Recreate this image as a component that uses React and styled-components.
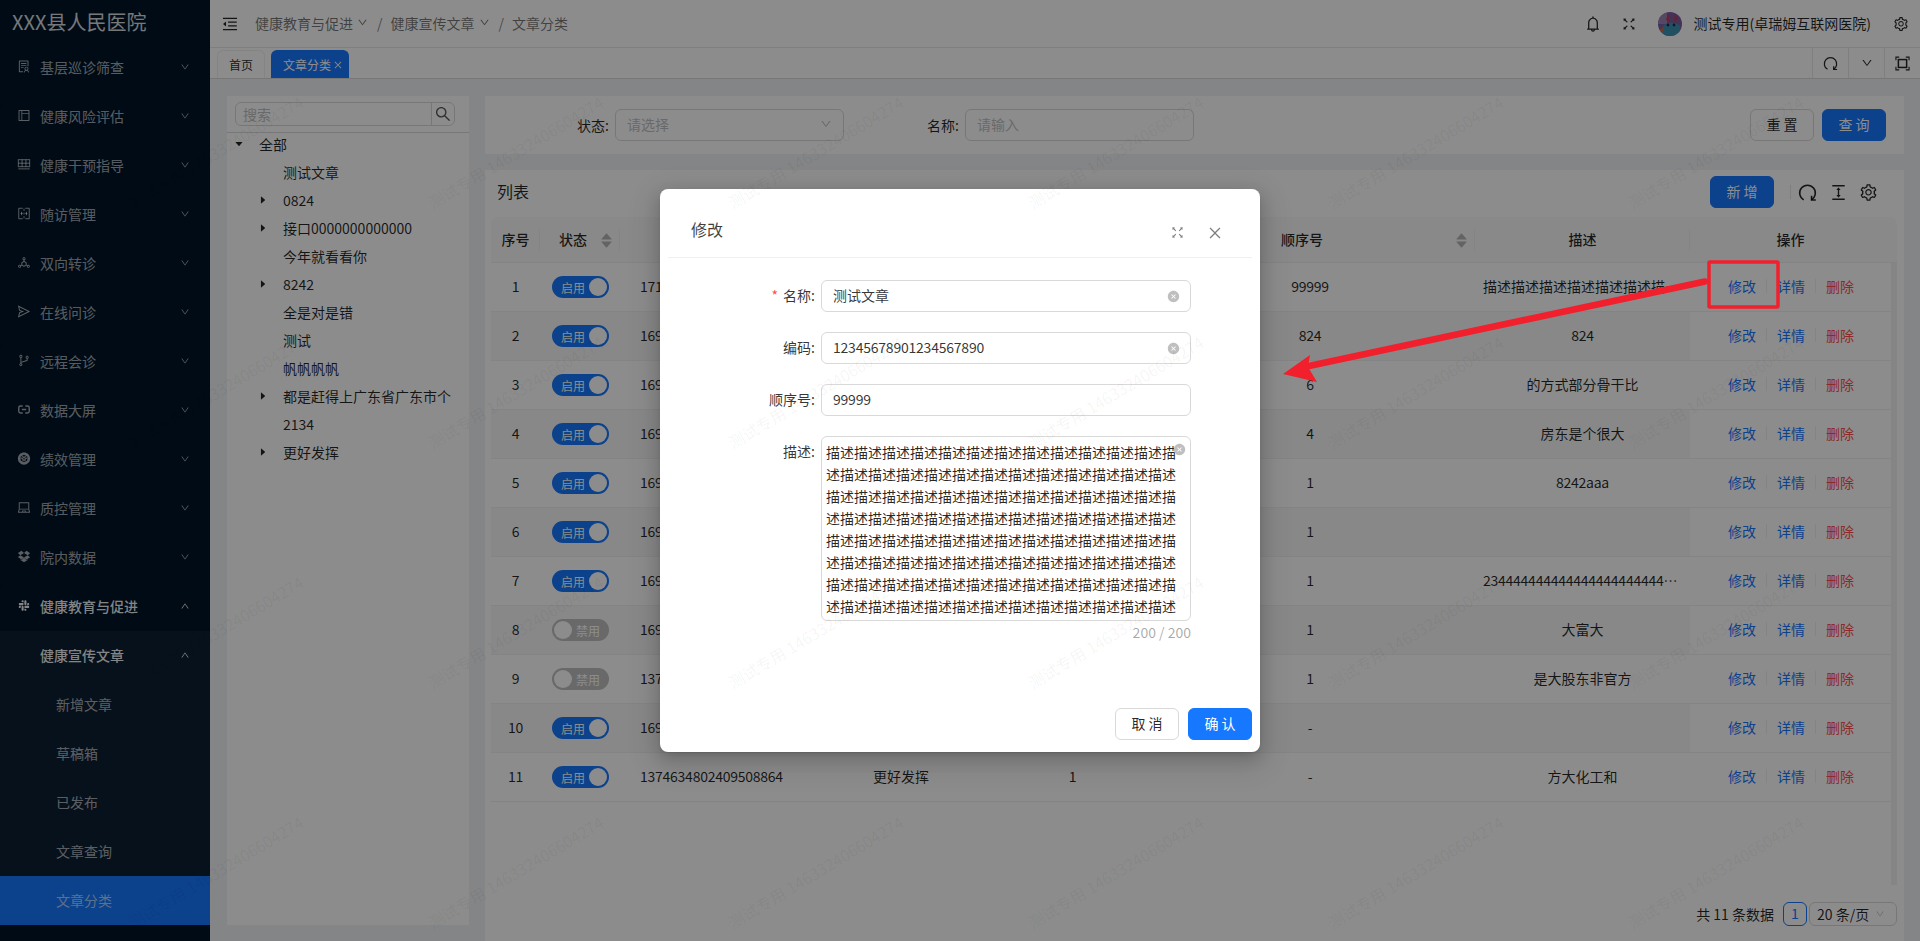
import React from 'react';
import styled, { createGlobalStyle } from 'styled-components';
import {
  AiOutlineSolution,
  AiOutlineLayout,
  AiOutlineDeploymentUnit,
  AiOutlineSend,
  AiOutlineBranches,
  AiFillCodeSandboxCircle,
  AiOutlineLaptop,
  AiOutlineDropbox,
  AiOutlineSlack,
  AiOutlineDown,
  AiOutlineUp,
  AiOutlineMenuFold,
  AiOutlineBell,
  AiOutlineFullscreen,
  AiOutlineSetting,
  AiOutlineColumnHeight,
  AiOutlineClose,
  AiFillCloseCircle,
  AiFillCaretDown,
  AiFillCaretRight,
  AiFillCaretUp,
  AiOutlineSearch,
} from 'react-icons/ai';

const GlobalStyle = createGlobalStyle`
  html, body {
    margin: 0;
    padding: 0;
    background: #f0f2f5;
    overflow: hidden;
  }
  * {
    box-sizing: border-box;
  }
  body, input, textarea, button {
    font-family: "Noto Sans CJK SC", "Noto Sans", sans-serif;
    font-size: 14px;
  }
`;

const COLUMNS = '49px 80px 182px 198px 145px 330px 215px 201px';

const Page = styled.div`
  position: relative;
  display: flex;
  width: 1920px;
  height: 941px;
  overflow: hidden;
  color: rgba(0, 0, 0, 0.85);
`;

/* Sidebar */
const Sidebar = styled.aside`
  flex: 0 0 210px;
  background: #001529;
  color: rgba(255, 255, 255, 0.65);
`;

const Logo = styled.div`
  height: 43px;
  padding: 0 0 0 12px;
  font-size: 20px;
  line-height: 43px;
  white-space: nowrap;
  color: rgba(255, 255, 255, 0.85);
`;

const SubMenu = styled.div`
  background: #0d1f33;
`;

const MenuRow = styled.div`
  display: flex;
  align-items: center;
  height: 49px;
  padding: 0 20px 2px ${p => p.$indent}px;
  background: ${p => (p.$active ? '#1677ff' : 'transparent')};
  color: ${p => (p.$bright ? 'rgba(255,255,255,0.95)' : 'inherit')};
  font-weight: ${p => (p.$bright ? 500 : 400)};
`;

const MenuIcon = styled.span`
  display: inline-flex;
  width: 14px;
  margin-right: 9px;
  font-size: 17px;
  justify-content: center;
`;

const MenuLabel = styled.span`
  flex: 1;
`;

const MenuArrow = styled.span`
  display: inline-flex;
  font-size: 10px;
`;

/* Main column */
const Main = styled.div`
  flex: 1;
  min-width: 0;
  display: flex;
  flex-direction: column;
`;

const Header = styled.header`
  flex: 0 0 48px;
  display: flex;
  align-items: center;
  padding: 0 11px;
  background: #fff;
  border-bottom: 1px solid #e8e8e8;
`;

const Toggle = styled.span`
  display: inline-flex;
  font-size: 18px;
  margin-right: 16px;
`;

const Crumb = styled.span`
  display: inline-flex;
  align-items: center;
  padding-bottom: 2px;
  color: rgba(0, 0, 0, 0.55);
  svg {
    margin-left: 4px;
    font-size: 11px;
  }
`;

const CrumbSep = styled.span`
  margin: 0 8px 2px 9px;
  color: rgba(0, 0, 0, 0.5);
`;

const HeaderRight = styled.div`
  margin-left: auto;
  display: flex;
  align-items: center;
`;

const HeaderIcon = styled.span`
  display: inline-flex;
  font-size: ${p => p.$size || 16}px;
  margin-left: ${p => p.$gap || 0}px;
`;

const HeaderUser = styled.span`
  padding-bottom: 2px;
`;

const Avatar = styled.svg`
  width: 24px;
  height: 24px;
  margin: 0 12px 0 21px;
`;

const TabBar = styled.div`
  flex: 0 0 31px;
  display: flex;
  align-items: flex-end;
  gap: 6px;
  padding-left: 7px;
  background: #fff;
  border-bottom: 1px solid #d9d9d9;
`;

const Tab = styled.div`
  display: flex;
  align-items: center;
  gap: 2px;
  height: 28px;
  width: ${p => p.$w}px;
  padding-left: 11px;
  font-size: 12px;
  border: 1px solid ${p => (p.$active ? '#1677ff' : '#f0f0f0')};
  border-bottom: 0;
  border-radius: 6px 6px 0 0;
  background: ${p => (p.$active ? '#1677ff' : '#fff')};
  color: ${p => (p.$active ? '#fff' : 'rgba(0,0,0,0.85)')};
  svg {
    font-size: 10px;
  }
`;

const TabTools = styled.div`
  margin-left: auto;
  display: flex;
  height: 30px;
`;

const TabTool = styled.div`
  display: flex;
  align-items: center;
  justify-content: center;
  width: 36px;
  border-left: 1px solid #e8e8e8;
  font-size: ${p => p.$size || 15}px;
`;

const Content = styled.div`
  flex: 1;
  min-height: 0;
  display: flex;
  gap: 16px;
  padding: 17px 16px 16px 17px;
  overflow: hidden;
`;

/* Tree */
const TreePanel = styled.section`
  flex: 0 0 242px;
  background: #fff;
`;

const TreeSearch = styled.div`
  height: 37px;
  padding: 6px 14px 0 8px;
  border-bottom: 1px solid #d9d9d9;
`;

const SearchBox = styled.div`
  display: flex;
  height: 24px;
  border: 1px solid #d9d9d9;
  border-radius: 6px;
`;

const SearchInput = styled.input`
  flex: 1;
  min-width: 0;
  padding: 0 7px;
  border: 0;
  background: transparent;
  outline: 0;
  line-height: 22px;
  &::placeholder {
    color: #bfbfbf;
  }
`;

const SearchButton = styled.span`
  display: flex;
  align-items: center;
  justify-content: center;
  width: 23px;
  border-left: 1px solid #d9d9d9;
  font-size: 18px;
  color: rgba(0, 0, 0, 0.65);
`;

const TreeRow = styled.div`
  display: flex;
  align-items: center;
  height: 28px;
  padding: 0 0 6px ${p => p.$level * 24}px;
  white-space: nowrap;
`;

const TreeCaret = styled.span`
  display: flex;
  align-items: center;
  justify-content: center;
  flex: 0 0 24px;
  margin-right: 8px;
  font-size: 10px;
`;

/* Right column */
const RightColumn = styled.div`
  flex: 1;
  min-width: 0;
  display: flex;
  flex-direction: column;
  gap: 16px;
`;

const FilterPanel = styled.section`
  flex: 0 0 58px;
  display: flex;
  align-items: center;
  padding: 0 18px 0 9px;
  background: #fff;
`;

const FilterField = styled.label`
  flex: 0 0 350px;
  display: flex;
  align-items: center;
  justify-content: flex-end;
  gap: 6px;
`;

const FilterControl = styled.div`
  display: flex;
  align-items: center;
  justify-content: space-between;
  width: 229px;
  height: 32px;
  padding: 0 11px 2px;
  border: 1px solid #d9d9d9;
  border-radius: 6px;
  color: #bfbfbf;
  svg {
    font-size: 12px;
  }
`;

const FilterActions = styled.div`
  margin-left: auto;
  display: flex;
  gap: 8px;
`;

const Button = styled.button`
  width: 64px;
  height: 32px;
  padding: 0 0 2px;
  border: 1px solid ${p => (p.$primary ? '#1677ff' : '#d9d9d9')};
  border-radius: 6px;
  background: ${p => (p.$primary ? '#1677ff' : '#fff')};
  color: ${p => (p.$primary ? '#fff' : 'rgba(0,0,0,0.85)')};
`;

const ListPanel = styled.section`
  flex: 0 0 771px;
  padding: 0 7px 0 6px;
  background: #fff;
`;

const ListBar = styled.div`
  display: flex;
  align-items: center;
  height: 47px;
  padding: 0 19px 3px 6px;
`;

const ListTitle = styled.div`
  flex: 1;
  font-size: 16px;
  padding-bottom: 2px;
`;

const BarDivider = styled.span`
  width: 1px;
  height: 14px;
  margin: 0 7px 0 16px;
  background: #e8e8e8;
`;

const BarIcon = styled.span`
  display: inline-flex;
  font-size: 19px;
  margin-left: ${p => p.$gap || 0}px;
`;

const TableHead = styled.div`
  display: grid;
  grid-template-columns: ${COLUMNS} 6px;
  height: 46px;
  background: #fafafa;
  border-bottom: 1px solid #f0f0f0;
  border-radius: 8px 8px 0 0;
  font-weight: 500;
`;

const HeadCell = styled.div`
  position: relative;
  display: flex;
  align-items: center;
  justify-content: ${p => (p.$sort ? 'flex-start' : 'center')};
  padding: 0 0 2px ${p => p.$sort || 0}px;
  &::after {
    content: '';
    display: ${p => (p.$last ? 'none' : 'block')};
    position: absolute;
    right: 0;
    top: 12px;
    height: 22px;
    width: 1px;
    background: #f0f0f0;
  }
`;

const Sorter = styled.span`
  position: absolute;
  right: 6px;
  top: 12px;
  display: flex;
  flex-direction: column;
  font-size: 15px;
  line-height: 0;
  color: #b5b5b5;
  svg + svg {
    margin-top: -7px;
  }
`;

const TableBody = styled.div`
  display: flex;
  height: 622px;
`;

const Rows = styled.div`
  flex: 0 0 1400px;
`;

const Scrollbar = styled.div`
  flex: 0 0 6px;
  background: #f2f2f2;
`;

const Row = styled.div`
  display: grid;
  grid-template-columns: ${COLUMNS};
  height: 49px;
  border-bottom: 1px solid #f0f0f0;
  background: ${p => (p.$stripe ? '#f8f8f8' : '#fff')};
`;

const Cell = styled.div`
  padding: 0 8px 0 ${p => (p.$left ? 20 : 8)}px;
  line-height: 46px;
  text-align: ${p => (p.$left ? 'left' : 'center')};
  white-space: nowrap;
  overflow: hidden;
  text-overflow: ellipsis;
  letter-spacing: ${p => (p.$num ? '-0.25px' : '0')};
`;

const SwitchCell = styled.div`
  display: flex;
  align-items: center;
  padding-left: 12px;
`;

const Switch = styled.div`
  display: flex;
  align-items: center;
  flex-direction: ${p => (p.$on ? 'row' : 'row-reverse')};
  justify-content: space-between;
  width: 57px;
  height: 22px;
  padding: 0 ${p => (p.$on ? 2 : 9)}px 0 ${p => (p.$on ? 9 : 2)}px;
  border-radius: 11px;
  background: ${p => (p.$on ? '#1677ff' : '#bfbfbf')};
  color: #fff;
  font-size: 12px;
`;

const Thumb = styled.span`
  width: 18px;
  height: 18px;
  border-radius: 50%;
  background: #fff;
`;

const Actions = styled.div`
  display: flex;
  align-items: center;
  padding: 0 0 2px 38px;
  background: #fff;
`;

const ActionLink = styled.a`
  color: ${p => (p.$danger ? '#ff4d4f' : '#1677ff')};
`;

const ActionSep = styled.span`
  width: 1px;
  height: 14px;
  margin: 0 10px;
  background: #f0f0f0;
`;

const Pagination = styled.div`
  display: flex;
  justify-content: flex-end;
  align-items: center;
  margin-top: 17px;
`;

const PageNumber = styled.span`
  width: 24px;
  height: 24px;
  margin: 0 2px 0 9px;
  border: 1px solid #1677ff;
  border-radius: 6px;
  color: #1677ff;
  line-height: 21px;
  text-align: center;
`;

const PageSize = styled.div`
  display: flex;
  align-items: center;
  justify-content: space-between;
  width: 88px;
  height: 24px;
  padding: 0 11px 0 7px;
  border: 1px solid #d9d9d9;
  border-radius: 6px;
  svg {
    font-size: 10px;
    color: #bfbfbf;
  }
`;

/* Overlays */
const Mask = styled.div`
  position: absolute;
  inset: 0;
  z-index: 10;
  background: rgba(0, 0, 0, 0.45);
`;

const Modal = styled.div`
  position: absolute;
  z-index: 11;
  left: 660px;
  top: 189px;
  width: 600px;
  height: 563px;
  display: flex;
  flex-direction: column;
  border-radius: 8px;
  background: #fff;
  box-shadow: 0 6px 16px 0 rgba(0, 0, 0, 0.16), 0 3px 6px -4px rgba(0, 0, 0, 0.2), 0 9px 28px 8px rgba(0, 0, 0, 0.1);
`;

const ModalHead = styled.div`
  display: flex;
  height: 69px;
  margin: 0 8px;
  padding: 28px 29px 0 23px;
  border-bottom: 1px solid #f0f0f0;
`;

const ModalTitle = styled.div`
  flex: 1;
  font-size: 16px;
  line-height: 24px;
  color: rgba(0, 0, 0, 0.75);
`;

const ModalTool = styled.span`
  display: inline-flex;
  align-self: flex-start;
  margin: 8px 0 0 ${p => p.$gap || 0}px;
  font-size: ${p => p.$size}px;
  color: rgba(0, 0, 0, 0.5);
`;

const ModalForm = styled.div`
  display: flex;
  flex-direction: column;
  gap: 20px;
  padding-top: 22px;
`;

const FormRow = styled.div`
  display: flex;
  align-items: flex-start;
`;

const FormLabel = styled.div`
  flex: 0 0 155px;
  margin-right: 6px;
  line-height: 30px;
  text-align: right;
  color: rgba(0, 0, 0, 0.8);
`;

const Required = styled.span`
  margin-right: 5px;
  color: #ff4d4f;
`;

const InputWrap = styled.div`
  display: flex;
  align-items: center;
  width: 370px;
  height: 32px;
  padding: 0 10px 0 11px;
  border: 1px solid #d9d9d9;
  border-radius: 6px;
`;

const TextInput = styled.input`
  flex: 1;
  min-width: 0;
  padding: 0 0 2px;
  border: 0;
  outline: 0;
  color: rgba(0, 0, 0, 0.8);
  letter-spacing: ${p => (p.$num ? '-0.22px' : '0')};
`;

const ClearIcon = styled(AiFillCloseCircle)`
  font-size: 13px;
  color: #bfbfbf;
`;

const TextAreaWrap = styled.div`
  position: relative;
  width: 370px;
`;

const TextArea = styled.textarea`
  display: block;
  width: 100%;
  height: 185px;
  padding: 4px 14px 2px 4px;
  border: 1px solid #d9d9d9;
  border-radius: 6px;
  outline: 0;
  resize: none;
  overflow: hidden;
  line-height: 22px;
  color: rgba(0, 0, 0, 0.85);
`;

const TextAreaClear = styled(ClearIcon)`
  position: absolute;
  right: 5px;
  top: 7px;
`;

const Count = styled.div`
  line-height: 22px;
  text-align: right;
  color: rgba(0, 0, 0, 0.35);
`;

const ModalFoot = styled.div`
  margin-top: auto;
  display: flex;
  justify-content: flex-end;
  gap: 9px;
  padding: 0 8px 12px;
`;

const Annotation = styled.svg`
  position: absolute;
  z-index: 11;
  left: 0;
  top: 0;
  pointer-events: none;
`;

const Watermarks = styled.div`
  position: absolute;
  z-index: 12;
  left: -235px;
  top: -208px;
  display: grid;
  grid-template-columns: repeat(8, 300px);
  grid-auto-rows: 240px;
  place-items: center;
  pointer-events: none;
`;

const Watermark = styled.span`
  transform: rotate(-31deg);
  font-size: 16px;
  white-space: nowrap;
  color: rgba(0, 0, 0, 0.05);
`;

/* Icons the icon set has no match for */
const GridGlyph = () => (
  <svg width="1em" height="1em" viewBox="0 0 16 16" fill="none" stroke="currentColor" strokeWidth="1.1">
    <rect x="1.5" y="2.5" width="13" height="8" />
    <path d="M1.5 6.5h13M5.8 2.5v8M10.2 2.5v8M1.5 13h13" />
  </svg>
);

const ScanGlyph = () => (
  <svg width="1em" height="1em" viewBox="0 0 16 16" fill="none" stroke="currentColor" strokeWidth="1.1">
    <path d="M6.5 2H2v12h4.5M9.5 2H14v12H9.5M8 2.5v2.5M8 7v2M8 11v2.5M4.2 8h2.3M9.5 8h2.3M5.2 6v4M10.8 6v4" />
  </svg>
);

const LinkGlyph = () => (
  <svg width="1em" height="1em" viewBox="0 0 16 16" fill="none" stroke="currentColor" strokeWidth="1.6">
    <path d="M6.5 4H4a2 2 0 0 0-2 2v4a2 2 0 0 0 2 2h2.5M9.5 4H12a2 2 0 0 1 2 2v4a2 2 0 0 1-2 2H9.5M5.5 8h5" />
  </svg>
);

const FocusGlyph = () => (
  <svg width="1em" height="1em" viewBox="0 0 16 16" fill="none" stroke="currentColor" strokeWidth="1.2">
    <path d="M1 4.5V1.2h3.5M11.5 1.2H15v3.3M15 11.5v3.3h-3.5M4.5 14.8H1v-3.3" />
    <rect x="3.6" y="3.8" width="8.8" height="8.4" strokeWidth="1.6" />
  </svg>
);

const ReloadGlyph = () => (
  <svg width="1em" height="1em" viewBox="0 0 16 16" fill="none" stroke="currentColor" strokeWidth="1.3">
    <path d="M4.8 14.2A6.6 6.6 0 1 1 11.2 14.2" />
    <path d="M11.4 10.8v3.6H15" />
  </svg>
);

const menuItems = [
  { label: '基层巡诊筛查', icon: <AiOutlineSolution /> },
  { label: '健康风险评估', icon: <AiOutlineLayout /> },
  { label: '健康干预指导', icon: <GridGlyph /> },
  { label: '随访管理', icon: <ScanGlyph /> },
  { label: '双向转诊', icon: <AiOutlineDeploymentUnit /> },
  { label: '在线问诊', icon: <AiOutlineSend /> },
  { label: '远程会诊', icon: <AiOutlineBranches /> },
  { label: '数据大屏', icon: <LinkGlyph /> },
  { label: '绩效管理', icon: <AiFillCodeSandboxCircle /> },
  { label: '质控管理', icon: <AiOutlineLaptop /> },
  { label: '院内数据', icon: <AiOutlineDropbox /> },
];

const subItems = ['新增文章', '草稿箱', '已发布', '文章查询'];

const treeItems = [
  { label: '全部', level: 0, caret: 'down' },
  { label: '测试文章', level: 1 },
  { label: '0824', level: 1, caret: 'right' },
  { label: '接口0000000000000', level: 1, caret: 'right' },
  { label: '今年就看看你', level: 1 },
  { label: '8242', level: 1, caret: 'right' },
  { label: '全是对是错', level: 1 },
  { label: '测试', level: 1 },
  { label: '帆帆帆帆', level: 1 },
  { label: '都是赶得上广东省广东市个', level: 1, caret: 'right' },
  { label: '2134', level: 1 },
  { label: '更好发挥', level: 1, caret: 'right' },
];

const DESC = '描述'.repeat(100);

const rows = [
  { on: true, id: '1718203344509952001', name: '测试文章', num: '1', order: '99999', desc: DESC },
  { on: true, id: '1696432208731136002', name: '0824', num: '1', order: '824', desc: '824' },
  { on: true, id: '1696103382409216001', name: '接口0000000000000', num: '1', order: '6', desc: '的方式部分骨干比' },
  { on: true, id: '1695841026572288002', name: '今年就看看你', num: '1', order: '4', desc: '房东是个很大' },
  { on: true, id: '1694630257106944001', name: '8242', num: '1', order: '1', desc: '8242aaa' },
  { on: true, id: '1693920164274176002', name: '全是对是错', num: '1', order: '1', desc: '' },
  { on: true, id: '1692451380236288001', name: '测试', num: '1', order: '1', desc: '2344444444444444444444444444444444' },
  { on: false, id: '1691027744509952002', name: '帆帆帆帆', num: '1', order: '1', desc: '大富大' },
  { on: false, id: '1374900316434944001', name: '都是赶得上广东省广东市个', num: '1', order: '1', desc: '是大股东非官方' },
  { on: true, id: '1690215582167040001', name: '2134', num: '1', order: '-', desc: '' },
  { on: true, id: '1374634802409508864', name: '更好发挥', num: '1', order: '-', desc: '方大化工和' },
];

const SortIcon = () => (
  <Sorter>
    <AiFillCaretUp />
    <AiFillCaretDown />
  </Sorter>
);

const Menu = () => (
  <Sidebar>
    <Logo>XXX县人民医院</Logo>
    {menuItems.map(item => (
      <MenuRow key={item.label} $indent={17}>
        <MenuIcon>{item.icon}</MenuIcon>
        <MenuLabel>{item.label}</MenuLabel>
        <MenuArrow>
          <AiOutlineDown />
        </MenuArrow>
      </MenuRow>
    ))}
    <MenuRow $indent={17} $bright>
      <MenuIcon>
        <AiOutlineSlack />
      </MenuIcon>
      <MenuLabel>健康教育与促进</MenuLabel>
      <MenuArrow>
        <AiOutlineUp />
      </MenuArrow>
    </MenuRow>
    <SubMenu>
      <MenuRow $indent={40} $bright>
        <MenuLabel>健康宣传文章</MenuLabel>
        <MenuArrow>
          <AiOutlineUp />
        </MenuArrow>
      </MenuRow>
      {subItems.map(label => (
        <MenuRow key={label} $indent={56}>
          {label}
        </MenuRow>
      ))}
      <MenuRow $indent={56} $active>
        文章分类
      </MenuRow>
    </SubMenu>
  </Sidebar>
);

const TopBar = () => (
  <Header>
    <Toggle>
      <AiOutlineMenuFold />
    </Toggle>
    <Crumb>
      健康教育与促进
      <AiOutlineDown />
    </Crumb>
    <CrumbSep>/</CrumbSep>
    <Crumb>
      健康宣传文章
      <AiOutlineDown />
    </Crumb>
    <CrumbSep>/</CrumbSep>
    <Crumb>文章分类</Crumb>
    <HeaderRight>
      <HeaderIcon $size={18}>
        <AiOutlineBell />
      </HeaderIcon>
      <HeaderIcon $gap={19}>
        <AiOutlineFullscreen />
      </HeaderIcon>
      <Avatar viewBox="0 0 24 24">
        <defs>
          <clipPath id="avatar-clip">
            <circle cx="12" cy="12" r="12" />
          </clipPath>
        </defs>
        <g clipPath="url(#avatar-clip)">
          <rect width="24" height="24" fill="#7c5c9e" />
          <path d="M0 0h9v12H0z" fill="#9a84b8" />
          <path d="M4 16c2-6 14-7 18-2v10H4z" fill="#3f93b4" />
          <path d="M10 1l2 9-4-2zM17 2l-1 8 4-3z" fill="#c23b5a" />
          <circle cx="10" cy="13" r="1.4" fill="#1d2b4a" />
          <circle cx="16" cy="13" r="1.4" fill="#1d2b4a" />
          <path d="M1 18l4-2 1 5z" fill="#d9663a" />
        </g>
      </Avatar>
      <HeaderUser>测试专用(卓瑞姆互联网医院)</HeaderUser>
      <HeaderIcon $gap={22}>
        <AiOutlineSetting />
      </HeaderIcon>
    </HeaderRight>
  </Header>
);

const Tabs = () => (
  <TabBar>
    <Tab $w={48}>首页</Tab>
    <Tab $w={78} $active>
      文章分类
      <AiOutlineClose />
    </Tab>
    <TabTools>
      <TabTool>
        <ReloadGlyph />
      </TabTool>
      <TabTool $size={12}>
        <AiOutlineDown />
      </TabTool>
      <TabTool $size={15}>
        <FocusGlyph />
      </TabTool>
    </TabTools>
  </TabBar>
);

const Tree = () => (
  <TreePanel>
    <TreeSearch>
      <SearchBox>
        <SearchInput placeholder="搜索" readOnly />
        <SearchButton>
          <AiOutlineSearch />
        </SearchButton>
      </SearchBox>
    </TreeSearch>
    {treeItems.map(item => (
      <TreeRow key={item.label} $level={item.level}>
        <TreeCaret>
          {item.caret === 'down' && <AiFillCaretDown />}
          {item.caret === 'right' && <AiFillCaretRight />}
        </TreeCaret>
        {item.label}
      </TreeRow>
    ))}
  </TreePanel>
);

const Filters = () => (
  <FilterPanel>
    <FilterField>
      状态:
      <FilterControl>
        请选择
        <AiOutlineDown />
      </FilterControl>
    </FilterField>
    <FilterField>
      名称:
      <FilterControl>请输入</FilterControl>
    </FilterField>
    <FilterActions>
      <Button>重 置</Button>
      <Button $primary>查 询</Button>
    </FilterActions>
  </FilterPanel>
);

const List = () => (
  <ListPanel>
    <ListBar>
      <ListTitle>列表</ListTitle>
      <Button $primary>新 增</Button>
      <BarDivider />
      <BarIcon>
        <ReloadGlyph />
      </BarIcon>
      <BarIcon $gap={12}>
        <AiOutlineColumnHeight />
      </BarIcon>
      <BarIcon $gap={11}>
        <AiOutlineSetting />
      </BarIcon>
    </ListBar>
    <TableHead>
      <HeadCell>序号</HeadCell>
      <HeadCell $sort={19}>
        状态
        <SortIcon />
      </HeadCell>
      <HeadCell>编码</HeadCell>
      <HeadCell>名称</HeadCell>
      <HeadCell>层级</HeadCell>
      <HeadCell $sort={136}>
        顺序号
        <SortIcon />
      </HeadCell>
      <HeadCell>描述</HeadCell>
      <HeadCell $last>操作</HeadCell>
      <HeadCell $last />
    </TableHead>
    <TableBody>
      <Rows>
        {rows.map((row, i) => (
          <Row key={row.id} $stripe={i % 2 === 1}>
            <Cell $num>{i + 1}</Cell>
            <SwitchCell>
              <Switch $on={row.on}>
                {row.on ? '启用' : '禁用'}
                <Thumb />
              </Switch>
            </SwitchCell>
            <Cell $left $num>
              {row.id}
            </Cell>
            <Cell>{row.name}</Cell>
            <Cell $num>{row.num}</Cell>
            <Cell $num>{row.order}</Cell>
            <Cell $num={/^\d/.test(row.desc)}>{row.desc}</Cell>
            <Actions>
              <ActionLink>修改</ActionLink>
              <ActionSep />
              <ActionLink>详情</ActionLink>
              <ActionSep />
              <ActionLink $danger>删除</ActionLink>
            </Actions>
          </Row>
        ))}
      </Rows>
      <Scrollbar />
    </TableBody>
    <Pagination>
      共 11 条数据
      <PageNumber>1</PageNumber>
      <PageSize>
        20 条/页
        <AiOutlineDown />
      </PageSize>
    </Pagination>
  </ListPanel>
);

const EditModal = () => (
  <Modal>
    <ModalHead>
      <ModalTitle>修改</ModalTitle>
      <ModalTool $size={15}>
        <AiOutlineFullscreen />
      </ModalTool>
      <ModalTool $size={16} $gap={22}>
        <AiOutlineClose />
      </ModalTool>
    </ModalHead>
    <ModalForm>
      <FormRow>
        <FormLabel>
          <Required>*</Required>
          名称:
        </FormLabel>
        <InputWrap>
          <TextInput value="测试文章" readOnly />
          <ClearIcon />
        </InputWrap>
      </FormRow>
      <FormRow>
        <FormLabel>编码:</FormLabel>
        <InputWrap>
          <TextInput $num value="12345678901234567890" readOnly />
          <ClearIcon />
        </InputWrap>
      </FormRow>
      <FormRow>
        <FormLabel>顺序号:</FormLabel>
        <InputWrap>
          <TextInput $num value="99999" readOnly />
        </InputWrap>
      </FormRow>
      <FormRow>
        <FormLabel>描述:</FormLabel>
        <TextAreaWrap>
          <TextArea value={DESC} readOnly />
          <TextAreaClear />
          <Count>200 / 200</Count>
        </TextAreaWrap>
      </FormRow>
    </ModalForm>
    <ModalFoot>
      <Button>取 消</Button>
      <Button $primary>确 认</Button>
    </ModalFoot>
  </Modal>
);

const App = () => (
  <Page>
    <GlobalStyle />
    <Menu />
    <Main>
      <TopBar />
      <Tabs />
      <Content>
        <Tree />
        <RightColumn>
          <Filters />
          <List />
        </RightColumn>
      </Content>
    </Main>
    <Mask />
    <EditModal />
    <Annotation width="1920" height="941" viewBox="0 0 1920 941">
      <rect x="1709" y="262" width="69" height="45" fill="none" stroke="#f21f2d" strokeWidth="3.5" rx="1" />
      <path d="M1705 281.5L1309 366" stroke="#f21f2d" strokeWidth="6.5" strokeLinecap="round" />
      <path d="M1283 374L1310 355L1308 367L1317 382Z" fill="#f21f2d" />
    </Annotation>
    <Watermarks>
      {Array.from({ length: 40 }, (_, i) => (
        <Watermark key={i}>测试专用 146332406604274</Watermark>
      ))}
    </Watermarks>
  </Page>
);

export default App;
